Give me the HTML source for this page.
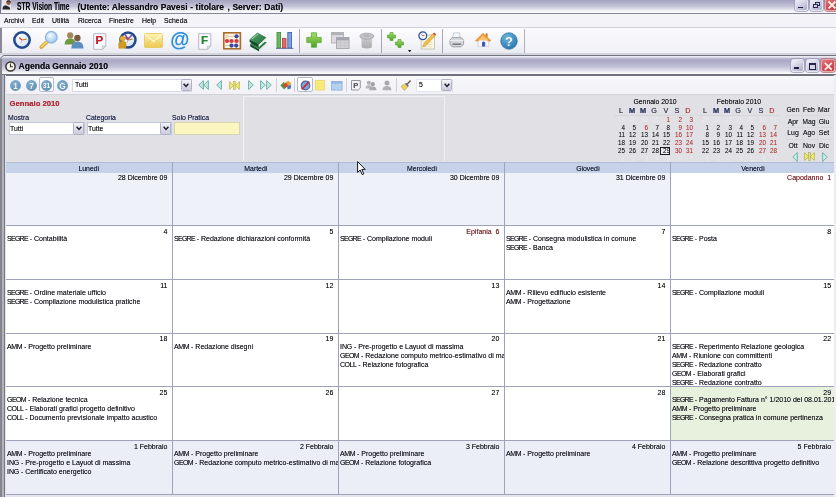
<!DOCTYPE html>
<html>
<head>
<meta charset="utf-8">
<title>STR Vision Time</title>
<style>
*{box-sizing:border-box;margin:0;padding:0}
html,body{-webkit-font-smoothing:antialiased;width:836px;height:497px;overflow:hidden;background:#ececf2;font-family:"Liberation Sans",sans-serif;font-size:7.3px;color:#151515;text-shadow:0 0 0.35px rgba(10,10,20,.55)}
#root{position:absolute;left:0;top:0;width:836px;height:497px;will-change:transform;opacity:.999}
.a{position:absolute}
.t{position:absolute;white-space:nowrap;font-size:7.3px;line-height:9px;transform:scaleX(.941);transform-origin:0 0}
.tr{position:absolute;white-space:nowrap;font-size:7.3px;line-height:9px;transform:scaleX(.941);transform-origin:100% 0;text-align:right}
.tc{position:absolute;white-space:nowrap;font-size:7.3px;line-height:9px;transform:scaleX(.941);transform-origin:50% 0;text-align:center}
.b{font-weight:bold}
.red{color:#cc2a30}
.cell{position:absolute;overflow:hidden}
.wbtn{position:absolute;border-radius:2.5px;border:1px solid #e6e6f2;box-shadow:0 0 0 .7px #9a9ab6;background:linear-gradient(150deg,#f3f3fb 0%,#d6d6e8 42%,#aaaac6 100%)}
.sep{position:absolute;width:1px;background:#a6a6b4}
svg{position:absolute;overflow:visible}
</style>
</head>
<body>
<div id="root">

<div class="a" style="left:0;top:0;width:836px;height:13.3px;background:linear-gradient(#a4a4c1 0%,#b2b2cb 25%,#c6c6d9 50%,#e2e2ec 72%,#f5f5fa 88%,#f9f9fd 100%)"></div>
<div class="a" style="left:0;top:0;width:1.2px;height:13px;background:#74749a"></div>
<div class="a" style="left:1.5px;top:0;width:9.5px;height:10px;background:linear-gradient(90deg,#f2eeee,#e6e4ee);opacity:.85"></div>
<svg style="left:1.5px;top:0" width="10" height="10" viewBox="0 0 10 10"><circle cx="6.6" cy="2.6" r="2.3" fill="#8a5a3a"/><path d="M4.6 1.2 Q6.6 -0.6 8.8 1.4 L8.6 2.2 Q6.4 0.8 4.6 2.4Z" fill="#3a2a20"/><path d="M0.4 9.4 Q0.6 5.6 3.4 5.2 L6.4 6.4 Q8.4 7 8.2 9.4 Z" fill="#2a2628"/></svg>
<div class="a b" style="left:17px;top:0.7px;font-size:10.2px;line-height:12px;white-space:nowrap;transform:scaleX(.655);transform-origin:0 0;color:#0c0c10">STR Vision Time</div>
<div class="a b" style="left:77.5px;top:0.5px;font-size:8.5px;line-height:12px;white-space:nowrap;color:#0c0c10;word-spacing:0.2px">(Utente: Alessandro Pavesi - titolare&nbsp;<span style="letter-spacing:-1.6px">&nbsp;</span>, Server: Dati)</div>
<div class="wbtn" style="left:795px;top:-2px;width:13px;height:13px"></div>
<div class="a" style="left:797.9px;top:6.5px;width:5px;height:1.9px;background:#1e1e40"></div>
<div class="wbtn" style="left:810px;top:-2px;width:13px;height:13px"></div>
<div class="a" style="left:815px;top:2px;width:5px;height:4px;border:1px solid #2a2a50;border-top-width:1.5px"></div>
<div class="a" style="left:813px;top:4px;width:5px;height:4px;border:1px solid #2a2a50;border-top-width:1.5px;background:#d0d0e0"></div>
<div class="wbtn" style="left:825.2px;top:-2px;width:13px;height:13px;border-color:#e8a8a8;box-shadow:0 0 0 .7px #b86a72;background:linear-gradient(150deg,#e27a7c 0%,#d2525a 45%,#c23a44 100%)"></div>
<svg style="left:828px;top:1px" width="8" height="8" viewBox="0 0 8 8"><path d="M0.5 0.5 L7.5 7.5 M7.5 0.5 L0.5 7.5" stroke="#fbeee6" stroke-width="1.8"/></svg>
<div class="a" style="left:0;top:13.1px;width:836px;height:1px;background:#868696"></div>
<div class="a" style="left:0;top:14px;width:836px;height:14px;background:#f3f3f8"></div>
<div class="t" style="left:3.6px;top:15.5px;color:#101018">Archivi</div>
<div class="t" style="left:32.3px;top:15.5px;color:#101018">Edit</div>
<div class="t" style="left:52px;top:15.5px;color:#101018">Utilità</div>
<div class="t" style="left:77.8px;top:15.5px;color:#101018">Ricerca</div>
<div class="t" style="left:108.6px;top:15.5px;color:#101018">Finestre</div>
<div class="t" style="left:142px;top:15.5px;color:#101018">Help</div>
<div class="t" style="left:163.5px;top:15.5px;color:#101018">Scheda</div>
<div class="a" style="left:0;top:27.4px;width:836px;height:1px;background:#d0d0da"></div>
<svg width="0" height="0" style="left:0;top:0"><defs>
<radialGradient id="gface" cx="40%" cy="35%" r="70%"><stop offset="0" stop-color="#ffffff"/><stop offset="1" stop-color="#cfe0f4"/></radialGradient>
<radialGradient id="glens" cx="40%" cy="35%" r="70%"><stop offset="0" stop-color="#f4fbff"/><stop offset="1" stop-color="#9cc6ec"/></radialGradient>
<linearGradient id="gmail" x1="0" y1="0" x2="0" y2="1"><stop offset="0" stop-color="#fdf3b4"/><stop offset="1" stop-color="#efc94e"/></linearGradient>
<linearGradient id="gplus" x1="0" y1="0" x2="0" y2="1"><stop offset="0" stop-color="#a6dc6a"/><stop offset="1" stop-color="#4fa326"/></linearGradient>
<radialGradient id="ghelp" cx="40%" cy="30%" r="75%"><stop offset="0" stop-color="#6cb6e0"/><stop offset="1" stop-color="#2676ae"/></radialGradient>
<radialGradient id="gcirc" cx="40%" cy="30%" r="75%"><stop offset="0" stop-color="#83b0d0"/><stop offset="1" stop-color="#5e90b6"/></radialGradient>
<linearGradient id="ggray" x1="0" y1="0" x2="0" y2="1"><stop offset="0" stop-color="#d6d6d8"/><stop offset="1" stop-color="#a8a8ac"/></linearGradient>
<linearGradient id="ggreenbk" x1="0" y1="0" x2="1" y2="1"><stop offset="0" stop-color="#5aa872"/><stop offset="1" stop-color="#1e6a3a"/></linearGradient>
</defs></svg>
<div class="a" style="left:0;top:28px;width:836px;height:26px;background:linear-gradient(#fcfcfe 0%,#f6f6fa 50%,#e9e9f1 100%)"></div>
<div class="a" style="left:525px;top:28px;width:311px;height:26px;background:linear-gradient(#fafafd,#f0f0f6)"></div>
<div class="a" style="left:0;top:28px;width:1.5px;height:26px;background:#8a8a96"></div>
<div class="a" style="left:0;top:53.4px;width:836px;height:1.2px;background:#d4d4de"></div>
<svg style="left:12px;top:30px" width="20" height="20" viewBox="0 0 20 20"><circle cx="10" cy="10" r="7.699999999999999" fill="url(#gface)" stroke="#214a8a" stroke-width="2.5"/><path d="M10 10 L7.2 7.6" stroke="#d04a28" stroke-width="1.3"/><path d="M10 10 L14.6 9.2" stroke="#d07a28" stroke-width="1.2"/><path d="M10 10 L8.8 13" stroke="#c8a090" stroke-width="0.8"/></svg>
<svg style="left:38px;top:30px" width="22" height="20" viewBox="0 0 22 20"><path d="M9.6 11.4 L3.2 17.2" stroke="#dca632" stroke-width="3.6" stroke-linecap="round"/><path d="M9.6 11.2 L3.4 16.8" stroke="#f6dc78" stroke-width="1.5" stroke-linecap="round"/><circle cx="13.3" cy="7.2" r="5.7" fill="url(#glens)" stroke="#92b8e2" stroke-width="1.5"/></svg>
<svg style="left:64px;top:30px" width="22" height="20" viewBox="0 0 22 20"><circle cx="6.2" cy="5.4" r="3.1" fill="#a08858"/><path d="M0.6 14.5 Q0.8 8.6 6.2 8.6 Q11.6 8.6 11.8 14.5 Z" fill="#6f9a3c"/><circle cx="13.4" cy="8" r="3.2" fill="#7a5a40"/><path d="M7.2 18.4 Q7.4 11.6 13.4 11.6 Q19.4 11.6 19.6 18.4 Z" fill="#5c8ec0"/></svg>
<svg style="left:93px;top:32.5px" width="14" height="17" viewBox="0 0 14 17"><path d="M0.7 0.7 H12.8 V13 L9.5 16.3 H0.7 Z" fill="#fbfbfd" stroke="#b4b8c4" stroke-width="1"/><path d="M12.8 13 H9.5 V16.3 Z" fill="#d8dae4" stroke="#b4b8c4" stroke-width="0.6"/><text x="6.4" y="11.2" font-family="Liberation Sans" font-weight="bold" font-size="11.5" text-anchor="middle" fill="#d41a28">P</text></svg>
<svg style="left:117.5px;top:30px" width="20" height="20" viewBox="0 0 20 20"><circle cx="10" cy="10" r="7.5" fill="url(#gface)" stroke="#214a8a" stroke-width="2.5"/><path d="M10 10 L7.2 7.6" stroke="#d04a28" stroke-width="1.3"/><path d="M10 10 L14.6 9.2" stroke="#d07a28" stroke-width="1.2"/><path d="M10 10 L8.8 13" stroke="#c8a090" stroke-width="0.8"/></svg>
<svg style="left:117.6px;top:35px" width="10" height="14" viewBox="0 0 10 14"><path d="M0.8 13.2 V8.6 Q0.8 6.2 4.4 6.2 Q8 6.2 8 8.6 V13.2 Z" fill="#d29a1e" stroke="#b8860f" stroke-width="0.5"/><circle cx="4.4" cy="3.6" r="2.5" fill="#e2ae30" stroke="#c08c14" stroke-width="0.5"/></svg>
<svg style="left:124px;top:33px" width="10" height="10" viewBox="0 0 10 10"><path d="M1 1.5 L4 6 L8 2" stroke="#8a4aa0" stroke-width="1.6" fill="none"/></svg>
<svg style="left:144px;top:33px" width="19" height="15" viewBox="0 0 19 15"><rect x="0.5" y="0.5" width="18" height="14" rx="1" fill="url(#gmail)" stroke="#e6c75a" stroke-width="0.8"/><path d="M0.8 1 L9.5 8.6 L18.2 1" fill="none" stroke="#fff8d0" stroke-width="1.3"/><path d="M0.8 14 L7 7 M18.2 14 L12 7" stroke="#e3c04e" stroke-width="0.8"/></svg>
<div class="a b" style="left:169.8px;top:27.4px;width:20px;height:24px;font-size:19.6px;line-height:24px;text-align:center;color:#2f8fd6;text-shadow:0 0 1px #9ccff2">@</div>
<svg style="left:198px;top:32.5px" width="14" height="17" viewBox="0 0 14 17"><path d="M0.7 0.7 H12.8 V13 L9.5 16.3 H0.7 Z" fill="#fbfbfd" stroke="#b4b8c4" stroke-width="1"/><path d="M12.8 13 H9.5 V16.3 Z" fill="#d8dae4" stroke="#b4b8c4" stroke-width="0.6"/><text x="6.4" y="11.2" font-family="Liberation Sans" font-weight="bold" font-size="11.5" text-anchor="middle" fill="#1e8a2c">F</text></svg>
<svg style="left:223px;top:32px" width="18" height="18" viewBox="0 0 18 18"><rect x="0.8" y="0.8" width="16.6" height="16" fill="#fbf3dc" stroke="#a86c2c" stroke-width="1.6"/><path d="M1 4.5 H17" stroke="#c8b48a" stroke-width="0.6"/><path d="M1 9 H17" stroke="#c8b48a" stroke-width="0.6"/><path d="M1 13.5 H17" stroke="#c8b48a" stroke-width="0.6"/><circle cx="13.5" cy="4.3" r="2.1" fill="#3a4aa8"/><circle cx="4" cy="9" r="2.1" fill="#d23a48"/><circle cx="8.5" cy="9" r="2.1" fill="#d23a48"/><circle cx="13.5" cy="9" r="2.1" fill="#d23a48"/><circle cx="8.5" cy="13.6" r="2.1" fill="#3a4aa8"/><circle cx="13.2" cy="13.6" r="2.1" fill="#3a4aa8"/><circle cx="3.5" cy="4.6" r="2.1" fill="#e8d8c0"/></svg>
<svg style="left:247.5px;top:30.5px" width="20" height="21" viewBox="0 0 20 21"><path d="M2.2 13 L11.2 18.2 V20.6 L2.2 15.4 Z" fill="#14502a"/><path d="M11.2 18.2 L18.8 11.4 V13.8 L11.2 20.6Z" fill="#e6eadf"/><path d="M2.2 13 L9.6 7.4 L18.8 11.4 L11.2 18.2 Z" fill="#2c7a48"/><path d="M1.6 8.2 L10.6 13.4 V16.2 L1.6 11 Z" fill="#0f4a26"/><path d="M10.6 13.4 L18.4 6.4 V9.2 L10.6 16.2Z" fill="#eef0e6"/><path d="M1.6 8.2 L9.4 1.6 L18.4 6.4 L10.6 13.4 Z" fill="url(#ggreenbk)"/><path d="M4 8 L10 3" stroke="#a4d8b4" stroke-width="1"/></svg>
<svg style="left:276px;top:31px" width="18" height="18" viewBox="0 0 18 18"><rect x="1" y="1.5" width="3.6" height="15.5" fill="#6cb85c" stroke="#3c8a3a" stroke-width="0.8"/><rect x="6.4" y="7.5" width="3.6" height="9.5" fill="#e46a6a" stroke="#b83a3a" stroke-width="0.8"/><rect x="11.8" y="1.5" width="3.8" height="15.5" fill="#7aa4e0" stroke="#3c5ca8" stroke-width="0.8"/><path d="M0 17.4 H17.5" stroke="#5a6a9a" stroke-width="0.9"/></svg>
<div class="sep" style="left:299px;top:29px;height:24px"></div>
<svg style="left:306px;top:32px" width="16" height="16" viewBox="0 0 16 16"><path d="M5.4 0.8 H10.6 V5.4 H15.2 V10.6 H10.6 V15.2 H5.4 V10.6 H0.8 V5.4 H5.4 Z" fill="url(#gplus)" stroke="#5aa832" stroke-width="0.8" stroke-linejoin="round"/></svg>
<svg style="left:331px;top:32px" width="19" height="17" viewBox="0 0 19 17"><rect x="0.5" y="0.5" width="12" height="10.5" fill="#dcdce0" stroke="#b6b6bc"/><rect x="0.5" y="0.5" width="12" height="2.6" fill="#b0b0b8"/><rect x="5.5" y="5.5" width="12.5" height="11" fill="#d2d2d6" stroke="#a8a8b0"/><rect x="5.5" y="5.5" width="12.5" height="2.8" fill="#a4a4ac"/><path d="M5.5 11 H18 M5.5 13.6 H18 M9.6 8.3 V16.5 M13.8 8.3 V16.5" stroke="#bcbcc2" stroke-width="0.5"/></svg>
<svg style="left:359px;top:32px" width="16" height="17" viewBox="0 0 16 17"><path d="M2.2 4.8 L2.8 15.4 Q7.8 17.4 12.8 15.4 L13.4 4.8 Z" fill="url(#ggray)"/><ellipse cx="7.8" cy="4.2" rx="7" ry="3" fill="#c4c4c8" stroke="#a2a2a8" stroke-width="0.8"/><ellipse cx="7.8" cy="3.6" rx="3" ry="1.2" fill="#b0b0b6"/><path d="M5.2 7.5 L5.8 15.4 M7.8 7.8 V16 M10.4 7.5 L9.8 15.4" stroke="#b6b6ba" stroke-width="0.7"/></svg>
<div class="sep" style="left:381px;top:29px;height:24px"></div>
<svg style="left:387px;top:32px" width="9" height="9" viewBox="0 0 9 9"><path d="M3 0.5 H6 V3 H8.5 V6 H6 V8.5 H3 V6 H0.5 V3 H3 Z" fill="url(#gplus)" stroke="#58a630" stroke-width="0.7" stroke-linejoin="round"/></svg>
<svg style="left:395px;top:38.5px" width="9" height="9" viewBox="0 0 9 9"><path d="M3 0.5 H6 V3 H8.5 V6 H6 V8.5 H3 V6 H0.5 V3 H3 Z" fill="url(#gplus)" stroke="#58a630" stroke-width="0.7" stroke-linejoin="round"/></svg>
<svg style="left:408px;top:50px" width="4" height="3" viewBox="0 0 4 3"><path d="M0 0 H3.4 L1.7 2.2 Z" fill="#111"/></svg>
<svg style="left:418px;top:31px" width="18" height="19" viewBox="0 0 18 19"><rect x="3.2" y="4" width="13.2" height="14" fill="#fbfbf4" stroke="#b8b8a8" stroke-width="0.8"/><path d="M5 11 H14.5 M5 13.4 H14.5 M5 15.8 H14.5" stroke="#e6c890" stroke-width="0.7"/><path d="M4.5 16 L6 12.5 L15 2.6 L17.2 4.6 L8 14.6 Z" fill="#f0c040" stroke="#c08820" stroke-width="0.5"/><path d="M15 2.6 L17.2 4.6 L18 3.2 L16.2 1.6Z" fill="#c03828"/><circle cx="4.8" cy="4.8" r="3.9" fill="#f4f8ff" stroke="#2c50a0" stroke-width="1.3"/><path d="M4.8 4.8 L3.4 3.4 M4.8 4.8 L6.6 4.2" stroke="#c83020" stroke-width="0.8"/></svg>
<div class="sep" style="left:441.5px;top:29px;height:24px"></div>
<svg style="left:449px;top:32px" width="16" height="16" viewBox="0 0 16 16"><path d="M4.4 1 L10.4 0.8 L11.4 6.4 H3.6 Z" fill="#f4f6fa" stroke="#b8bcc8" stroke-width="0.7"/><path d="M1 7.8 L3.4 5.6 H12 L14.6 7.8 V12.2 L12 14.8 H3.2 L1 12.2 Z" fill="#d4d6dc" stroke="#8c9098" stroke-width="0.8"/><path d="M1 8.6 H14.6" stroke="#f0f0f4" stroke-width="1"/><path d="M3.4 11.4 H12.2 V13 H3.4Z" fill="#787c84"/></svg>
<svg style="left:475px;top:32px" width="17" height="16" viewBox="0 0 17 16"><path d="M3 8 V14.6 H13.8 V8 Z" fill="#f6f6fa" stroke="#c0c4d0" stroke-width="0.6"/><path d="M0.6 8.6 L8 1.2 L15.8 8.6 L14 9.4 L8 4 L2.4 9.4 Z" fill="#f0a040" stroke="#d88420" stroke-width="0.6"/><path d="M8 3.4 L3 8.2 H13.4 Z" fill="#f8c070"/><rect x="10.6" y="1.4" width="2" height="3.4" fill="#d07828"/><path d="M7 14.6 V10.4 Q8.6 8.4 10.2 10.4 V14.6 Z" fill="#3a5ab0"/></svg>
<svg style="left:500px;top:31.5px" width="18" height="18" viewBox="0 0 18 18"><circle cx="9" cy="9" r="8.3" fill="url(#ghelp)" stroke="#1f6a9e" stroke-width="0.6"/><text x="9" y="13.6" font-family="Liberation Sans" font-weight="bold" font-size="13" text-anchor="middle" fill="#fff">?</text></svg>
<div class="sep" style="left:524px;top:29px;height:24px;background:#b0b0be"></div>
<div class="a" style="left:0;top:56px;width:836px;height:441px;background:#e9e9f0"></div>
<div class="a" style="left:0.3px;top:54.9px;width:838px;height:20.1px;border-top-left-radius:5px;border:1px solid #74747f;border-bottom:none;background:linear-gradient(#eeeef7 0%,#e4e4f1 6%,#b4b4cd 14%,#a9a9c5 24%,#bcbcd4 52%,#dedeeb 76%,#f8f8fc 90%,#ffffff 100%)"></div>
<div class="a" style="left:2px;top:74.4px;width:834px;height:1.5px;background:#72727e"></div>
<div class="a" style="left:0;top:59px;width:2px;height:438px;background:#85858e"></div>
<div class="a" style="left:2px;top:75px;width:1.6px;height:422px;background:#b2b2bc"></div>
<div class="a" style="left:3.5px;top:75px;width:1.3px;height:422px;background:#767680"></div>
<div class="a" style="left:4.8px;top:75px;width:1.2px;height:422px;background:#e2e2ea"></div>
<div class="a" style="left:834px;top:75px;width:2px;height:422px;background:#ededf3"></div>
<svg style="left:5px;top:60.5px" width="11" height="11" viewBox="0 0 11 11"><circle cx="5.5" cy="5.5" r="4.6" fill="#f6f6f2" stroke="#3a3428" stroke-width="1.5"/><path d="M5.5 2.6 V5.7 H8" stroke="#3a3428" stroke-width="1.1" fill="none"/></svg>
<div class="a b" style="left:18.6px;top:60.1px;font-size:8.6px;line-height:12px;white-space:nowrap;color:#0c0c10;letter-spacing:-0.02px">Agenda Gennaio 2010</div>
<div class="wbtn" style="left:791.4px;top:59px;width:12.4px;height:13.4px"></div>
<div class="a" style="left:794.3px;top:67.4px;width:4.3px;height:1.9px;background:#1e1e40"></div>
<div class="wbtn" style="left:806.2px;top:59px;width:12.8px;height:13.4px"></div>
<div class="a" style="left:809.2px;top:62.6px;width:7.2px;height:7.3px;border:1px solid #26264a;border-top-width:2px;background:#d6d6e6"></div>
<div class="wbtn" style="left:821.2px;top:59px;width:13.6px;height:13.4px;border-color:#e8a8a8;box-shadow:0 0 0 .7px #b86a72;background:linear-gradient(150deg,#e27a7c 0%,#d2525a 45%,#c23a44 100%)"></div>
<svg style="left:824px;top:61.8px" width="8.6" height="8.6" viewBox="0 0 8.6 8.6"><path d="M0.8 0.8 L7.8 7.8 M7.8 0.8 L0.8 7.8" stroke="#fbeee6" stroke-width="1.8"/></svg>
<div class="a" style="left:6px;top:75.9px;width:828px;height:18.4px;background:linear-gradient(#f8f8fb,#f1f1f6)"></div>
<svg style="left:9.5px;top:79.5px" width="11" height="11" viewBox="0 0 11 11"><circle cx="5.5" cy="5.5" r="5.4" fill="url(#gcirc)"/><text x="5.5" y="8.524000000000001" font-family="Liberation Sans" font-weight="bold" font-size="8.4" text-anchor="middle" fill="#fff">1</text></svg>
<svg style="left:25.5px;top:79.5px" width="11" height="11" viewBox="0 0 11 11"><circle cx="5.5" cy="5.5" r="5.4" fill="url(#gcirc)"/><text x="5.5" y="8.524000000000001" font-family="Liberation Sans" font-weight="bold" font-size="8.4" text-anchor="middle" fill="#fff">7</text></svg>
<div class="a" style="left:39.4px;top:77.4px;width:14.6px;height:14.6px;border:1px solid #b8bccc;border-radius:2px;background:#fdfdff"></div>
<svg style="left:41.2px;top:79.5px" width="11" height="11" viewBox="0 0 11 11"><circle cx="5.5" cy="5.5" r="5.4" fill="url(#gcirc)"/><text x="5.5" y="7.948" font-family="Liberation Sans" font-weight="bold" font-size="6.8" text-anchor="middle" fill="#fff">31</text></svg>
<svg style="left:56.5px;top:79.5px" width="11" height="11" viewBox="0 0 11 11"><circle cx="5.5" cy="5.5" r="5.4" fill="url(#gcirc)"/><text x="5.5" y="8.524000000000001" font-family="Liberation Sans" font-weight="bold" font-size="8.4" text-anchor="middle" fill="#fff">G</text></svg>
<div class="a" style="left:71.5px;top:78.5px;width:120.5px;height:13px;background:#fff;border:1px solid #d6dae6"></div>
<div class="a" style="left:180.5px;top:79.0px;width:11.0px;height:12px;border:1px solid #b0b0c6;border-radius:1.5px;background:linear-gradient(#f4f4fa,#cacadc)"></div>
<svg style="left:183.1px;top:82.8px" width="6" height="5" viewBox="0 0 6 5"><path d="M0.6 0.8 L3 3.4 L5.4 0.8" stroke="#1c1c28" stroke-width="1.5" fill="none"/></svg>
<div class="t" style="left:75.1px;top:80.4px">Tutti</div>
<svg style="left:197.8px;top:80px" width="6" height="10" viewBox="0 0 6 10"><path d="M5.4 0.6 L0.7 5 L5.4 9.4 Z" fill="#c2eadc" stroke="#55a0a6" stroke-width="0.8" stroke-linejoin="round"/></svg>
<svg style="left:203.4px;top:80px" width="6" height="10" viewBox="0 0 6 10"><path d="M5.4 0.6 L0.7 5 L5.4 9.4 Z" fill="#c2eadc" stroke="#55a0a6" stroke-width="0.8" stroke-linejoin="round"/></svg>
<svg style="left:216px;top:80px" width="6" height="10" viewBox="0 0 6 10"><path d="M5.4 0.6 L0.7 5 L5.4 9.4 Z" fill="#c2eadc" stroke="#55a0a6" stroke-width="0.8" stroke-linejoin="round"/></svg>
<svg style="left:229.3px;top:80.5px" width="11" height="9" viewBox="0 0 11 9"><path d="M0.6 0.6 L4.4 4.5 L0.6 8.4 Z" fill="#f2ee70" stroke="#b0ac3c" stroke-width="0.7"/><path d="M10.4 0.6 L6.6 4.5 L10.4 8.4 Z" fill="#f2ee70" stroke="#b0ac3c" stroke-width="0.7"/><rect x="4.7" y="0.4" width="1.6" height="8.2" fill="#e6e25a" stroke="#a8a438" stroke-width="0.5"/></svg>
<svg style="left:247.6px;top:80px" width="6" height="10" viewBox="0 0 6 10"><path d="M0.6 0.6 L5.3 5 L0.6 9.4 Z" fill="#c2eadc" stroke="#55a0a6" stroke-width="0.8" stroke-linejoin="round"/></svg>
<svg style="left:260.2px;top:80px" width="6" height="10" viewBox="0 0 6 10"><path d="M0.6 0.6 L5.3 5 L0.6 9.4 Z" fill="#c2eadc" stroke="#55a0a6" stroke-width="0.8" stroke-linejoin="round"/></svg>
<svg style="left:265.8px;top:80px" width="6" height="10" viewBox="0 0 6 10"><path d="M0.6 0.6 L5.3 5 L0.6 9.4 Z" fill="#c2eadc" stroke="#55a0a6" stroke-width="0.8" stroke-linejoin="round"/></svg>
<div class="sep" style="left:276px;top:78px;height:14px;background:#cfcfd9"></div>
<svg style="left:280px;top:79.6px" width="12" height="10" viewBox="0 0 12 10"><path d="M0.4 5.6 L3.6 2 L7.6 5.6 L4.2 9.6 Z" fill="#4a9a3c"/><path d="M3.8 3.4 L8.2 0.8 L11.4 3.6 L7.4 7.4Z" fill="#e2a234"/><circle cx="5.6" cy="5.4" r="2.1" fill="#d8442e"/><path d="M7.2 6.2 L11.2 4.6 L10.8 8.6 L7.6 9.4Z" fill="#4a74c0"/></svg>
<div class="sep" style="left:294px;top:78px;height:14px;background:#cfcfd9"></div>
<div class="a" style="left:296.8px;top:77.4px;width:16.2px;height:15px;border:1px solid #b6bace;border-radius:2px;background:#fff"></div>
<svg style="left:299.5px;top:79.5px" width="11" height="11" viewBox="0 0 11 11"><circle cx="5.5" cy="5.5" r="4.3" fill="#7aa4d8" stroke="#4a6aa8" stroke-width="1.2"/><path d="M9.2 1.6 L1.8 9.4" stroke="#c8303c" stroke-width="1.8"/></svg>
<svg style="left:315px;top:80px" width="10" height="10.5" viewBox="0 0 10 10.5"><rect x="0.4" y="0.4" width="9.2" height="9.6" fill="#f8ec7c" stroke="#e4d458" stroke-width="0.7"/><path d="M1.5 4 H8.5 M1.5 6.5 H8.5" stroke="#f0e060" stroke-width="0.6"/></svg>
<svg style="left:331px;top:80.5px" width="11.5" height="9.5" viewBox="0 0 11.5 9.5"><rect x="0.4" y="0.4" width="10.7" height="8.7" fill="#b4d2ee" stroke="#8ab0da" stroke-width="0.8"/><rect x="0.4" y="0.4" width="10.7" height="2.2" fill="#8eb6e0"/></svg>
<div class="sep" style="left:345.8px;top:78px;height:14px;background:#cfcfd9"></div>
<svg style="left:350.5px;top:80px" width="10" height="10.5" viewBox="0 0 10 10.5"><path d="M0.5 0.5 H9.3 V8 L7.2 10 H0.5Z" fill="#f4f4f6" stroke="#8c8c94" stroke-width="0.9"/><text x="4.8" y="8.2" font-family="Liberation Sans" font-weight="bold" font-size="7.6" text-anchor="middle" fill="#5a5a62">P</text></svg>
<svg style="left:364.5px;top:80px" width="12" height="10.5" viewBox="0 0 12 10.5"><circle cx="3.8" cy="2.8" r="2" fill="#b0b0b4"/><path d="M0.4 8.6 Q0.6 5 3.8 5 Q7 5 7.2 8.6Z" fill="#b8b8bc"/><circle cx="7.8" cy="4.2" r="2.1" fill="#a0a0a6"/><path d="M4 10.2 Q4.2 6.4 7.8 6.4 Q11.4 6.4 11.6 10.2Z" fill="#a8a8ae"/></svg>
<svg style="left:381.5px;top:80px" width="10" height="10.5" viewBox="0 0 10 10.5"><circle cx="5" cy="3" r="2.5" fill="#a8a8ae"/><path d="M0.5 10.2 Q0.7 6 5 6 Q9.3 6 9.5 10.2Z" fill="#b0b0b6"/></svg>
<div class="sep" style="left:395.8px;top:78px;height:14px;background:#cfcfd9"></div>
<svg style="left:400px;top:79.5px" width="12" height="11" viewBox="0 0 12 11"><path d="M10.6 0.6 L6.4 5" stroke="#6a5a48" stroke-width="1.4"/><path d="M1 6.4 L6 3.2 L8.6 6 L4.4 10.4 Z" fill="#e8d460" stroke="#b8a030" stroke-width="0.6"/><path d="M5.6 3.6 L8.2 6.2" stroke="#4a6ab0" stroke-width="1.4"/></svg>
<div class="a" style="left:416.4px;top:78.5px;width:36.5px;height:13px;background:#fff;border:1px solid #e2e5ee"></div>
<div class="a" style="left:441.4px;top:79.0px;width:11.0px;height:12px;border:1px solid #b0b0c6;border-radius:1.5px;background:linear-gradient(#f4f4fa,#cacadc)"></div>
<svg style="left:444.0px;top:82.8px" width="6" height="5" viewBox="0 0 6 5"><path d="M0.6 0.8 L3 3.4 L5.4 0.8" stroke="#1c1c28" stroke-width="1.5" fill="none"/></svg>
<div class="t" style="left:418.79999999999995px;top:80.4px">5</div>
<div class="a" style="left:6px;top:94.2px;width:828px;height:67.4px;background:#e0e0e5"></div>
<div class="a" style="left:6px;top:94.2px;width:828px;height:1px;background:#d2d2da"></div>
<div class="a" style="left:243px;top:96px;width:201px;height:64.5px;background:#dfdfe4;border-left:1px solid #f4f4f8;border-top:1px solid #f0f0f5"></div>
<div class="a" style="left:444px;top:96px;width:1px;height:64.5px;background:#eeeef3"></div>
<div class="a b" style="left:9.6px;top:98.8px;font-size:7.7px;line-height:10px;white-space:nowrap;color:#c8202e">Gennaio 2010</div>
<div class="t" style="left:7.8px;top:112.8px;color:#182050">Mostra</div>
<div class="a" style="left:8.5px;top:121.8px;width:76.3px;height:13.6px;background:#fff;border:1px solid #c2cadc"></div>
<div class="a" style="left:73.3px;top:122.3px;width:11.0px;height:12.6px;border:1px solid #b0b0c6;border-radius:1.5px;background:linear-gradient(#f4f4fa,#cacadc)"></div>
<svg style="left:75.89999999999999px;top:126.39999999999999px" width="6" height="5" viewBox="0 0 6 5"><path d="M0.6 0.8 L3 3.4 L5.4 0.8" stroke="#1c1c28" stroke-width="1.5" fill="none"/></svg>
<div class="t" style="left:10.3px;top:124.0px">Tutti</div>
<div class="t" style="left:86.3px;top:112.8px;color:#182050">Categoria</div>
<div class="a" style="left:86.6px;top:121.8px;width:85.2px;height:13.6px;background:#fff;border:1px solid #c2cadc"></div>
<div class="a" style="left:160.3px;top:122.3px;width:11.0px;height:12.6px;border:1px solid #b0b0c6;border-radius:1.5px;background:linear-gradient(#f4f4fa,#cacadc)"></div>
<svg style="left:162.9px;top:126.39999999999999px" width="6" height="5" viewBox="0 0 6 5"><path d="M0.6 0.8 L3 3.4 L5.4 0.8" stroke="#1c1c28" stroke-width="1.5" fill="none"/></svg>
<div class="t" style="left:88.39999999999999px;top:124.0px">Tutte</div>
<div class="t" style="left:172.2px;top:112.8px;color:#182050">Solo Pratica</div>
<div class="a" style="left:174.4px;top:121.6px;width:66px;height:13.6px;background:#fbf6c0;border:1px solid #d6d4b4"></div>
<div class="tc" style="left:615.4px;width:80px;top:97px">Gennaio 2010</div>
<div class="a" style="left:614.6px;width:12px;top:105.8px;font-size:7.9px;line-height:10px;text-align:center;color:#3a3a42;font-weight:normal;transform:scaleX(.92)">L</div>
<div class="a" style="left:625.87px;width:12px;top:105.8px;font-size:7.9px;line-height:10px;text-align:center;color:#2c3468;font-weight:bold;transform:scaleX(.92)">M</div>
<div class="a" style="left:637.14px;width:12px;top:105.8px;font-size:7.9px;line-height:10px;text-align:center;color:#2c3468;font-weight:bold;transform:scaleX(.92)">M</div>
<div class="a" style="left:648.4100000000001px;width:12px;top:105.8px;font-size:7.9px;line-height:10px;text-align:center;color:#3c4458;font-weight:normal;transform:scaleX(.92)">G</div>
<div class="a" style="left:659.6800000000001px;width:12px;top:105.8px;font-size:7.9px;line-height:10px;text-align:center;color:#3c4458;font-weight:normal;transform:scaleX(.92)">V</div>
<div class="a" style="left:670.95px;width:12px;top:105.8px;font-size:7.9px;line-height:10px;text-align:center;color:#34405c;font-weight:normal;transform:scaleX(.92)">S</div>
<div class="a" style="left:682.22px;width:12px;top:105.8px;font-size:7.9px;line-height:10px;text-align:center;color:#cc3a3a;font-weight:normal;transform:scaleX(.92)">D</div>
<div class="a" style="left:613.6px;top:114.5px;width:81.62px;height:1px;background:#d6d6dc"></div>
<div class="tr" style="left:611.2px;width:14px;top:114.8px;color:#e9e9ee;font-size:6.7px;text-shadow:none">28</div>
<div class="tr" style="left:622.47px;width:14px;top:114.8px;color:#e9e9ee;font-size:6.7px;text-shadow:none">29</div>
<div class="tr" style="left:633.74px;width:14px;top:114.8px;color:#e9e9ee;font-size:6.7px;text-shadow:none">30</div>
<div class="tr" style="left:645.0100000000001px;width:14px;top:114.8px;color:#e9e9ee;font-size:6.7px;text-shadow:none">31</div>
<div class="tr" style="left:656.2800000000001px;width:14px;top:114.8px;color:#cc3a3a;font-size:6.7px;text-shadow:0 0 .3px rgba(10,10,20,.35)">1</div>
<div class="tr" style="left:667.5500000000001px;width:14px;top:114.8px;color:#cc3a3a;font-size:6.7px;text-shadow:0 0 .3px rgba(10,10,20,.35)">2</div>
<div class="tr" style="left:678.82px;width:14px;top:114.8px;color:#cc3a3a;font-size:6.7px;text-shadow:0 0 .3px rgba(10,10,20,.35)">3</div>
<div class="tr" style="left:611.2px;width:14px;top:122.6px;color:#16161c;font-size:6.7px;text-shadow:0 0 .3px rgba(10,10,20,.35)">4</div>
<div class="tr" style="left:622.47px;width:14px;top:122.6px;color:#16161c;font-size:6.7px;text-shadow:0 0 .3px rgba(10,10,20,.35)">5</div>
<div class="tr" style="left:633.74px;width:14px;top:122.6px;color:#cc3a3a;font-size:6.7px;text-shadow:0 0 .3px rgba(10,10,20,.35)">6</div>
<div class="tr" style="left:645.0100000000001px;width:14px;top:122.6px;color:#16161c;font-size:6.7px;text-shadow:0 0 .3px rgba(10,10,20,.35)">7</div>
<div class="tr" style="left:656.2800000000001px;width:14px;top:122.6px;color:#16161c;font-size:6.7px;text-shadow:0 0 .3px rgba(10,10,20,.35)">8</div>
<div class="tr" style="left:667.5500000000001px;width:14px;top:122.6px;color:#cc3a3a;font-size:6.7px;text-shadow:0 0 .3px rgba(10,10,20,.35)">9</div>
<div class="tr" style="left:678.82px;width:14px;top:122.6px;color:#cc3a3a;font-size:6.7px;text-shadow:0 0 .3px rgba(10,10,20,.35)">10</div>
<div class="tr" style="left:611.2px;width:14px;top:130.4px;color:#16161c;font-size:6.7px;text-shadow:0 0 .3px rgba(10,10,20,.35)">11</div>
<div class="tr" style="left:622.47px;width:14px;top:130.4px;color:#16161c;font-size:6.7px;text-shadow:0 0 .3px rgba(10,10,20,.35)">12</div>
<div class="tr" style="left:633.74px;width:14px;top:130.4px;color:#16161c;font-size:6.7px;text-shadow:0 0 .3px rgba(10,10,20,.35)">13</div>
<div class="tr" style="left:645.0100000000001px;width:14px;top:130.4px;color:#16161c;font-size:6.7px;text-shadow:0 0 .3px rgba(10,10,20,.35)">14</div>
<div class="tr" style="left:656.2800000000001px;width:14px;top:130.4px;color:#16161c;font-size:6.7px;text-shadow:0 0 .3px rgba(10,10,20,.35)">15</div>
<div class="tr" style="left:667.5500000000001px;width:14px;top:130.4px;color:#cc3a3a;font-size:6.7px;text-shadow:0 0 .3px rgba(10,10,20,.35)">16</div>
<div class="tr" style="left:678.82px;width:14px;top:130.4px;color:#cc3a3a;font-size:6.7px;text-shadow:0 0 .3px rgba(10,10,20,.35)">17</div>
<div class="tr" style="left:611.2px;width:14px;top:138.20000000000002px;color:#16161c;font-size:6.7px;text-shadow:0 0 .3px rgba(10,10,20,.35)">18</div>
<div class="tr" style="left:622.47px;width:14px;top:138.20000000000002px;color:#16161c;font-size:6.7px;text-shadow:0 0 .3px rgba(10,10,20,.35)">19</div>
<div class="tr" style="left:633.74px;width:14px;top:138.20000000000002px;color:#16161c;font-size:6.7px;text-shadow:0 0 .3px rgba(10,10,20,.35)">20</div>
<div class="tr" style="left:645.0100000000001px;width:14px;top:138.20000000000002px;color:#16161c;font-size:6.7px;text-shadow:0 0 .3px rgba(10,10,20,.35)">21</div>
<div class="tr" style="left:656.2800000000001px;width:14px;top:138.20000000000002px;color:#16161c;font-size:6.7px;text-shadow:0 0 .3px rgba(10,10,20,.35)">22</div>
<div class="tr" style="left:667.5500000000001px;width:14px;top:138.20000000000002px;color:#cc3a3a;font-size:6.7px;text-shadow:0 0 .3px rgba(10,10,20,.35)">23</div>
<div class="tr" style="left:678.82px;width:14px;top:138.20000000000002px;color:#cc3a3a;font-size:6.7px;text-shadow:0 0 .3px rgba(10,10,20,.35)">24</div>
<div class="tr" style="left:611.2px;width:14px;top:146.0px;color:#16161c;font-size:6.7px;text-shadow:0 0 .3px rgba(10,10,20,.35)">25</div>
<div class="tr" style="left:622.47px;width:14px;top:146.0px;color:#16161c;font-size:6.7px;text-shadow:0 0 .3px rgba(10,10,20,.35)">26</div>
<div class="tr" style="left:633.74px;width:14px;top:146.0px;color:#16161c;font-size:6.7px;text-shadow:0 0 .3px rgba(10,10,20,.35)">27</div>
<div class="tr" style="left:645.0100000000001px;width:14px;top:146.0px;color:#16161c;font-size:6.7px;text-shadow:0 0 .3px rgba(10,10,20,.35)">28</div>
<div class="a" style="left:660.08px;top:146.89999999999998px;width:10.4px;height:7.8px;border:1px solid #1a1a20;background:#ececf0"></div>
<div class="tr" style="left:656.2800000000001px;width:14px;top:146.0px;color:#16161c;font-size:6.7px;text-shadow:0 0 .3px rgba(10,10,20,.35)">29</div>
<div class="tr" style="left:667.5500000000001px;width:14px;top:146.0px;color:#cc3a3a;font-size:6.7px;text-shadow:0 0 .3px rgba(10,10,20,.35)">30</div>
<div class="tr" style="left:678.82px;width:14px;top:146.0px;color:#cc3a3a;font-size:6.7px;text-shadow:0 0 .3px rgba(10,10,20,.35)">31</div>
<div class="tr" style="left:611.2px;width:14px;top:153.8px;color:#e9e9ee;font-size:6.7px;text-shadow:none">1</div>
<div class="tr" style="left:622.47px;width:14px;top:153.8px;color:#e9e9ee;font-size:6.7px;text-shadow:none">2</div>
<div class="tr" style="left:633.74px;width:14px;top:153.8px;color:#e9e9ee;font-size:6.7px;text-shadow:none">3</div>
<div class="tr" style="left:645.0100000000001px;width:14px;top:153.8px;color:#e9e9ee;font-size:6.7px;text-shadow:none">4</div>
<div class="tr" style="left:656.2800000000001px;width:14px;top:153.8px;color:#e9e9ee;font-size:6.7px;text-shadow:none">5</div>
<div class="tr" style="left:667.5500000000001px;width:14px;top:153.8px;color:#e9e9ee;font-size:6.7px;text-shadow:none">6</div>
<div class="tr" style="left:678.82px;width:14px;top:153.8px;color:#e9e9ee;font-size:6.7px;text-shadow:none">7</div>
<div class="tc" style="left:698.8px;width:80px;top:97px">Febbraio 2010</div>
<div class="a" style="left:698.6px;width:12px;top:105.8px;font-size:7.9px;line-height:10px;text-align:center;color:#3a3a42;font-weight:normal;transform:scaleX(.92)">L</div>
<div class="a" style="left:709.87px;width:12px;top:105.8px;font-size:7.9px;line-height:10px;text-align:center;color:#2c3468;font-weight:bold;transform:scaleX(.92)">M</div>
<div class="a" style="left:721.14px;width:12px;top:105.8px;font-size:7.9px;line-height:10px;text-align:center;color:#2c3468;font-weight:bold;transform:scaleX(.92)">M</div>
<div class="a" style="left:732.4100000000001px;width:12px;top:105.8px;font-size:7.9px;line-height:10px;text-align:center;color:#3c4458;font-weight:normal;transform:scaleX(.92)">G</div>
<div class="a" style="left:743.6800000000001px;width:12px;top:105.8px;font-size:7.9px;line-height:10px;text-align:center;color:#3c4458;font-weight:normal;transform:scaleX(.92)">V</div>
<div class="a" style="left:754.95px;width:12px;top:105.8px;font-size:7.9px;line-height:10px;text-align:center;color:#34405c;font-weight:normal;transform:scaleX(.92)">S</div>
<div class="a" style="left:766.22px;width:12px;top:105.8px;font-size:7.9px;line-height:10px;text-align:center;color:#cc3a3a;font-weight:normal;transform:scaleX(.92)">D</div>
<div class="a" style="left:697.6px;top:114.5px;width:81.62px;height:1px;background:#d6d6dc"></div>
<div class="tr" style="left:695.2px;width:14px;top:114.8px;color:#e9e9ee;font-size:6.7px;text-shadow:none">25</div>
<div class="tr" style="left:706.47px;width:14px;top:114.8px;color:#e9e9ee;font-size:6.7px;text-shadow:none">26</div>
<div class="tr" style="left:717.74px;width:14px;top:114.8px;color:#e9e9ee;font-size:6.7px;text-shadow:none">27</div>
<div class="tr" style="left:729.0100000000001px;width:14px;top:114.8px;color:#e9e9ee;font-size:6.7px;text-shadow:none">28</div>
<div class="tr" style="left:740.2800000000001px;width:14px;top:114.8px;color:#e9e9ee;font-size:6.7px;text-shadow:none">29</div>
<div class="tr" style="left:751.5500000000001px;width:14px;top:114.8px;color:#e9e9ee;font-size:6.7px;text-shadow:none">30</div>
<div class="tr" style="left:762.82px;width:14px;top:114.8px;color:#e9e9ee;font-size:6.7px;text-shadow:none">31</div>
<div class="tr" style="left:695.2px;width:14px;top:122.6px;color:#16161c;font-size:6.7px;text-shadow:0 0 .3px rgba(10,10,20,.35)">1</div>
<div class="tr" style="left:706.47px;width:14px;top:122.6px;color:#16161c;font-size:6.7px;text-shadow:0 0 .3px rgba(10,10,20,.35)">2</div>
<div class="tr" style="left:717.74px;width:14px;top:122.6px;color:#16161c;font-size:6.7px;text-shadow:0 0 .3px rgba(10,10,20,.35)">3</div>
<div class="tr" style="left:729.0100000000001px;width:14px;top:122.6px;color:#16161c;font-size:6.7px;text-shadow:0 0 .3px rgba(10,10,20,.35)">4</div>
<div class="tr" style="left:740.2800000000001px;width:14px;top:122.6px;color:#16161c;font-size:6.7px;text-shadow:0 0 .3px rgba(10,10,20,.35)">5</div>
<div class="tr" style="left:751.5500000000001px;width:14px;top:122.6px;color:#cc3a3a;font-size:6.7px;text-shadow:0 0 .3px rgba(10,10,20,.35)">6</div>
<div class="tr" style="left:762.82px;width:14px;top:122.6px;color:#cc3a3a;font-size:6.7px;text-shadow:0 0 .3px rgba(10,10,20,.35)">7</div>
<div class="tr" style="left:695.2px;width:14px;top:130.4px;color:#16161c;font-size:6.7px;text-shadow:0 0 .3px rgba(10,10,20,.35)">8</div>
<div class="tr" style="left:706.47px;width:14px;top:130.4px;color:#16161c;font-size:6.7px;text-shadow:0 0 .3px rgba(10,10,20,.35)">9</div>
<div class="tr" style="left:717.74px;width:14px;top:130.4px;color:#16161c;font-size:6.7px;text-shadow:0 0 .3px rgba(10,10,20,.35)">10</div>
<div class="tr" style="left:729.0100000000001px;width:14px;top:130.4px;color:#16161c;font-size:6.7px;text-shadow:0 0 .3px rgba(10,10,20,.35)">11</div>
<div class="tr" style="left:740.2800000000001px;width:14px;top:130.4px;color:#16161c;font-size:6.7px;text-shadow:0 0 .3px rgba(10,10,20,.35)">12</div>
<div class="tr" style="left:751.5500000000001px;width:14px;top:130.4px;color:#cc3a3a;font-size:6.7px;text-shadow:0 0 .3px rgba(10,10,20,.35)">13</div>
<div class="tr" style="left:762.82px;width:14px;top:130.4px;color:#cc3a3a;font-size:6.7px;text-shadow:0 0 .3px rgba(10,10,20,.35)">14</div>
<div class="tr" style="left:695.2px;width:14px;top:138.20000000000002px;color:#16161c;font-size:6.7px;text-shadow:0 0 .3px rgba(10,10,20,.35)">15</div>
<div class="tr" style="left:706.47px;width:14px;top:138.20000000000002px;color:#16161c;font-size:6.7px;text-shadow:0 0 .3px rgba(10,10,20,.35)">16</div>
<div class="tr" style="left:717.74px;width:14px;top:138.20000000000002px;color:#16161c;font-size:6.7px;text-shadow:0 0 .3px rgba(10,10,20,.35)">17</div>
<div class="tr" style="left:729.0100000000001px;width:14px;top:138.20000000000002px;color:#16161c;font-size:6.7px;text-shadow:0 0 .3px rgba(10,10,20,.35)">18</div>
<div class="tr" style="left:740.2800000000001px;width:14px;top:138.20000000000002px;color:#16161c;font-size:6.7px;text-shadow:0 0 .3px rgba(10,10,20,.35)">19</div>
<div class="tr" style="left:751.5500000000001px;width:14px;top:138.20000000000002px;color:#cc3a3a;font-size:6.7px;text-shadow:0 0 .3px rgba(10,10,20,.35)">20</div>
<div class="tr" style="left:762.82px;width:14px;top:138.20000000000002px;color:#cc3a3a;font-size:6.7px;text-shadow:0 0 .3px rgba(10,10,20,.35)">21</div>
<div class="tr" style="left:695.2px;width:14px;top:146.0px;color:#16161c;font-size:6.7px;text-shadow:0 0 .3px rgba(10,10,20,.35)">22</div>
<div class="tr" style="left:706.47px;width:14px;top:146.0px;color:#16161c;font-size:6.7px;text-shadow:0 0 .3px rgba(10,10,20,.35)">23</div>
<div class="tr" style="left:717.74px;width:14px;top:146.0px;color:#16161c;font-size:6.7px;text-shadow:0 0 .3px rgba(10,10,20,.35)">24</div>
<div class="tr" style="left:729.0100000000001px;width:14px;top:146.0px;color:#16161c;font-size:6.7px;text-shadow:0 0 .3px rgba(10,10,20,.35)">25</div>
<div class="tr" style="left:740.2800000000001px;width:14px;top:146.0px;color:#16161c;font-size:6.7px;text-shadow:0 0 .3px rgba(10,10,20,.35)">26</div>
<div class="tr" style="left:751.5500000000001px;width:14px;top:146.0px;color:#cc3a3a;font-size:6.7px;text-shadow:0 0 .3px rgba(10,10,20,.35)">27</div>
<div class="tr" style="left:762.82px;width:14px;top:146.0px;color:#cc3a3a;font-size:6.7px;text-shadow:0 0 .3px rgba(10,10,20,.35)">28</div>
<div class="tr" style="left:695.2px;width:14px;top:153.8px;color:#e9e9ee;font-size:6.7px;text-shadow:none">1</div>
<div class="tr" style="left:706.47px;width:14px;top:153.8px;color:#e9e9ee;font-size:6.7px;text-shadow:none">2</div>
<div class="tr" style="left:717.74px;width:14px;top:153.8px;color:#e9e9ee;font-size:6.7px;text-shadow:none">3</div>
<div class="tr" style="left:729.0100000000001px;width:14px;top:153.8px;color:#e9e9ee;font-size:6.7px;text-shadow:none">4</div>
<div class="tr" style="left:740.2800000000001px;width:14px;top:153.8px;color:#e9e9ee;font-size:6.7px;text-shadow:none">5</div>
<div class="tr" style="left:751.5500000000001px;width:14px;top:153.8px;color:#e9e9ee;font-size:6.7px;text-shadow:none">6</div>
<div class="tr" style="left:762.82px;width:14px;top:153.8px;color:#e9e9ee;font-size:6.7px;text-shadow:none">7</div>
<div class="tc" style="left:783.3px;width:20px;top:104.8px;color:#1a1a24">Gen</div>
<div class="tc" style="left:798.8px;width:20px;top:104.8px;color:#1a1a24">Feb</div>
<div class="tc" style="left:813.7px;width:20px;top:104.8px;color:#1a1a24">Mar</div>
<div class="tc" style="left:783.3px;width:20px;top:116.6px;color:#1a1a24">Apr</div>
<div class="tc" style="left:798.8px;width:20px;top:116.6px;color:#1a1a24">Mag</div>
<div class="tc" style="left:813.7px;width:20px;top:116.6px;color:#1a1a24">Giu</div>
<div class="tc" style="left:783.3px;width:20px;top:128.4px;color:#1a1a24">Lug</div>
<div class="tc" style="left:798.8px;width:20px;top:128.4px;color:#1a1a24">Ago</div>
<div class="tc" style="left:813.7px;width:20px;top:128.4px;color:#1a1a24">Set</div>
<div class="tc" style="left:783.3px;width:20px;top:141.4px;color:#1a1a24">Ott</div>
<div class="tc" style="left:798.8px;width:20px;top:141.4px;color:#1a1a24">Nov</div>
<div class="tc" style="left:813.7px;width:20px;top:141.4px;color:#1a1a24">Dic</div>
<div class="a" style="left:801.6px;top:103px;width:1px;height:48px;background:#d8d8df"></div>
<div class="a" style="left:817px;top:103px;width:1px;height:48px;background:#d8d8df"></div>
<div class="a" style="left:786px;top:114.8px;width:46px;height:1px;background:#d8d8df"></div>
<div class="a" style="left:786px;top:126.6px;width:46px;height:1px;background:#d8d8df"></div>
<div class="a" style="left:786px;top:138.8px;width:46px;height:1px;background:#d8d8df"></div>
<svg style="left:792px;top:151.6px" width="6" height="10" viewBox="0 0 6 10"><path d="M5.4 0.6 L0.7 5 L5.4 9.4 Z" fill="#c6ecdc" stroke="#58aaa6" stroke-width="0.8" stroke-linejoin="round"/></svg>
<svg style="left:803.9px;top:152.1px" width="11" height="9" viewBox="0 0 11 9"><path d="M0.6 0.6 L4.4 4.5 L0.6 8.4 Z" fill="#f2ee70" stroke="#b0ac3c" stroke-width="0.7"/><path d="M10.4 0.6 L6.6 4.5 L10.4 8.4 Z" fill="#f2ee70" stroke="#b0ac3c" stroke-width="0.7"/><rect x="4.7" y="0.4" width="1.6" height="8.2" fill="#e6e25a" stroke="#a8a438" stroke-width="0.5"/></svg>
<svg style="left:822.2px;top:151.6px" width="6" height="10" viewBox="0 0 6 10"><path d="M0.6 0.6 L5.3 5 L0.6 9.4 Z" fill="#c6ecdc" stroke="#58aaa6" stroke-width="0.8" stroke-linejoin="round"/></svg>
<div class="a" style="left:6px;top:161.8px;width:828px;height:11.2px;background:#c5d2e9"></div>
<div class="a" style="left:6px;top:161.5px;width:828px;height:1px;background:#b0bcd6"></div>
<div class="tc" style="left:59.0px;width:60px;top:163.5px;color:#14182a">Lunedì</div>
<div class="tc" style="left:225.5px;width:60px;top:163.5px;color:#14182a">Martedì</div>
<div class="tc" style="left:391.5px;width:60px;top:163.5px;color:#14182a">Mercoledì</div>
<div class="tc" style="left:557.5px;width:60px;top:163.5px;color:#14182a">Giovedì</div>
<div class="tc" style="left:722.5px;width:60px;top:163.5px;color:#14182a">Venerdì</div>
<div class="cell" style="left:6px;top:173px;width:166px;height:52px;background:#eef1f8"><div class="a" style="left:0;top:0;width:172.91666666666669px;height:60px;transform:scaleX(0.96);transform-origin:0 0;color:#14141a"><div class="a" style="right:4.791666666666666px;top:-0.4px;white-space:nowrap;line-height:9px;color:#14141a">28 Dicembre 09</div></div></div>
<div class="cell" style="left:173px;top:173px;width:165px;height:52px;background:#eef1f8"><div class="a" style="left:0;top:0;width:171.875px;height:60px;transform:scaleX(0.96);transform-origin:0 0;color:#14141a"><div class="a" style="right:4.791666666666666px;top:-0.4px;white-space:nowrap;line-height:9px;color:#14141a">29 Dicembre 09</div></div></div>
<div class="cell" style="left:339px;top:173px;width:165px;height:52px;background:#eef1f8"><div class="a" style="left:0;top:0;width:171.875px;height:60px;transform:scaleX(0.96);transform-origin:0 0;color:#14141a"><div class="a" style="right:4.791666666666666px;top:-0.4px;white-space:nowrap;line-height:9px;color:#14141a">30 Dicembre 09</div></div></div>
<div class="cell" style="left:505px;top:173px;width:165px;height:52px;background:#eef1f8"><div class="a" style="left:0;top:0;width:171.875px;height:60px;transform:scaleX(0.96);transform-origin:0 0;color:#14141a"><div class="a" style="right:4.791666666666666px;top:-0.4px;white-space:nowrap;line-height:9px;color:#14141a">31 Dicembre 09</div></div></div>
<div class="cell" style="left:671px;top:173px;width:163px;height:52px;background:#fff"><div class="a" style="left:0;top:0;width:169.79166666666669px;height:60px;transform:scaleX(0.96);transform-origin:0 0;color:#14141a"><div class="a" style="right:3.0208333333333335px;top:-0.4px;white-space:nowrap;line-height:9px;color:#8c1c20">Capodanno &nbsp;1</div></div></div>
<div class="cell" style="left:6px;top:226px;width:166px;height:53px;background:#fff"><div class="a" style="left:0;top:0;width:172.91666666666669px;height:60px;transform:scaleX(0.96);transform-origin:0 0;color:#14141a"><div class="a" style="right:4.791666666666666px;top:0.5px;white-space:nowrap;line-height:9px;color:#14141a">4</div><div class="a" style="left:1.1458333333333335px;top:8.3px;white-space:nowrap;line-height:9px"><span style="letter-spacing:-0.8px">SEGRE</span> - Contabilità</div></div></div>
<div class="cell" style="left:173px;top:226px;width:165px;height:53px;background:#fff"><div class="a" style="left:0;top:0;width:171.875px;height:60px;transform:scaleX(0.96);transform-origin:0 0;color:#14141a"><div class="a" style="right:4.791666666666666px;top:0.5px;white-space:nowrap;line-height:9px;color:#14141a">5</div><div class="a" style="left:1.1458333333333335px;top:8.3px;white-space:nowrap;line-height:9px"><span style="letter-spacing:-0.8px">SEGRE</span> - Redazione dichiarazioni conformità</div></div></div>
<div class="cell" style="left:339px;top:226px;width:165px;height:53px;background:#fff"><div class="a" style="left:0;top:0;width:171.875px;height:60px;transform:scaleX(0.96);transform-origin:0 0;color:#14141a"><div class="a" style="right:4.791666666666666px;top:0.5px;white-space:nowrap;line-height:9px;color:#8c1c20">Epifania &nbsp;6</div><div class="a" style="left:1.1458333333333335px;top:8.3px;white-space:nowrap;line-height:9px"><span style="letter-spacing:-0.8px">SEGRE</span> - Compilazione moduli</div></div></div>
<div class="cell" style="left:505px;top:226px;width:165px;height:53px;background:#fff"><div class="a" style="left:0;top:0;width:171.875px;height:60px;transform:scaleX(0.96);transform-origin:0 0;color:#14141a"><div class="a" style="right:4.791666666666666px;top:0.5px;white-space:nowrap;line-height:9px;color:#14141a">7</div><div class="a" style="left:1.1458333333333335px;top:8.3px;white-space:nowrap;line-height:9px"><span style="letter-spacing:-0.8px">SEGRE</span> - Consegna modulistica in comune</div><div class="a" style="left:1.1458333333333335px;top:17.35px;white-space:nowrap;line-height:9px"><span style="letter-spacing:-0.8px">SEGRE</span> - Banca</div></div></div>
<div class="cell" style="left:671px;top:226px;width:163px;height:53px;background:#fff"><div class="a" style="left:0;top:0;width:169.79166666666669px;height:60px;transform:scaleX(0.96);transform-origin:0 0;color:#14141a"><div class="a" style="right:3.0208333333333335px;top:0.5px;white-space:nowrap;line-height:9px;color:#14141a">8</div><div class="a" style="left:1.1458333333333335px;top:8.3px;white-space:nowrap;line-height:9px"><span style="letter-spacing:-0.8px">SEGRE</span> - Posta</div></div></div>
<div class="cell" style="left:6px;top:280px;width:166px;height:52.5px;background:#fff"><div class="a" style="left:0;top:0;width:172.91666666666669px;height:60px;transform:scaleX(0.96);transform-origin:0 0;color:#14141a"><div class="a" style="right:4.791666666666666px;top:0.5px;white-space:nowrap;line-height:9px;color:#14141a">11</div><div class="a" style="left:1.1458333333333335px;top:8.3px;white-space:nowrap;line-height:9px"><span style="letter-spacing:-0.8px">SEGRE</span> - Ordine materiale ufficio</div><div class="a" style="left:1.1458333333333335px;top:17.35px;white-space:nowrap;line-height:9px"><span style="letter-spacing:-0.8px">SEGRE</span> - Compilazione modulistica pratiche</div></div></div>
<div class="cell" style="left:173px;top:280px;width:165px;height:52.5px;background:#fff"><div class="a" style="left:0;top:0;width:171.875px;height:60px;transform:scaleX(0.96);transform-origin:0 0;color:#14141a"><div class="a" style="right:4.791666666666666px;top:0.5px;white-space:nowrap;line-height:9px;color:#14141a">12</div></div></div>
<div class="cell" style="left:339px;top:280px;width:165px;height:52.5px;background:#fff"><div class="a" style="left:0;top:0;width:171.875px;height:60px;transform:scaleX(0.96);transform-origin:0 0;color:#14141a"><div class="a" style="right:4.791666666666666px;top:0.5px;white-space:nowrap;line-height:9px;color:#14141a">13</div></div></div>
<div class="cell" style="left:505px;top:280px;width:165px;height:52.5px;background:#fff"><div class="a" style="left:0;top:0;width:171.875px;height:60px;transform:scaleX(0.96);transform-origin:0 0;color:#14141a"><div class="a" style="right:4.791666666666666px;top:0.5px;white-space:nowrap;line-height:9px;color:#14141a">14</div><div class="a" style="left:1.1458333333333335px;top:8.3px;white-space:nowrap;line-height:9px"><span style="letter-spacing:-0.47px">AMM</span> - Rilievo edifiucio esistente</div><div class="a" style="left:1.1458333333333335px;top:17.35px;white-space:nowrap;line-height:9px"><span style="letter-spacing:-0.47px">AMM</span> - Progettazione</div></div></div>
<div class="cell" style="left:671px;top:280px;width:163px;height:52.5px;background:#fff"><div class="a" style="left:0;top:0;width:169.79166666666669px;height:60px;transform:scaleX(0.96);transform-origin:0 0;color:#14141a"><div class="a" style="right:3.0208333333333335px;top:0.5px;white-space:nowrap;line-height:9px;color:#14141a">15</div><div class="a" style="left:1.1458333333333335px;top:8.3px;white-space:nowrap;line-height:9px"><span style="letter-spacing:-0.8px">SEGRE</span> - Compilazione moduli</div></div></div>
<div class="cell" style="left:6px;top:333.5px;width:166px;height:52.60000000000002px;background:#fff"><div class="a" style="left:0;top:0;width:172.91666666666669px;height:60px;transform:scaleX(0.96);transform-origin:0 0;color:#14141a"><div class="a" style="right:4.791666666666666px;top:0.5px;white-space:nowrap;line-height:9px;color:#14141a">18</div><div class="a" style="left:1.1458333333333335px;top:8.3px;white-space:nowrap;line-height:9px"><span style="letter-spacing:-0.47px">AMM</span> - Progetto preliminare</div></div></div>
<div class="cell" style="left:173px;top:333.5px;width:165px;height:52.60000000000002px;background:#fff"><div class="a" style="left:0;top:0;width:171.875px;height:60px;transform:scaleX(0.96);transform-origin:0 0;color:#14141a"><div class="a" style="right:4.791666666666666px;top:0.5px;white-space:nowrap;line-height:9px;color:#14141a">19</div><div class="a" style="left:1.1458333333333335px;top:8.3px;white-space:nowrap;line-height:9px"><span style="letter-spacing:-0.47px">AMM</span> - Redazione disegni</div></div></div>
<div class="cell" style="left:339px;top:333.5px;width:165px;height:52.60000000000002px;background:#fff"><div class="a" style="left:0;top:0;width:171.875px;height:60px;transform:scaleX(0.96);transform-origin:0 0;color:#14141a"><div class="a" style="right:4.791666666666666px;top:0.5px;white-space:nowrap;line-height:9px;color:#14141a">20</div><div class="a" style="left:1.1458333333333335px;top:8.3px;white-space:nowrap;line-height:9px"><span style="letter-spacing:-0.17px">ING</span> - Pre-progetto e Layuot di massima</div><div class="a" style="left:1.1458333333333335px;top:17.35px;white-space:nowrap;line-height:9px"><span style="letter-spacing:-0.64px">GEOM</span> - Redazione computo metrico-estimativo di massima</div><div class="a" style="left:1.1458333333333335px;top:26.400000000000002px;white-space:nowrap;line-height:9px"><span style="letter-spacing:-0.56px">COLL</span> - Relazione fotografica</div></div></div>
<div class="cell" style="left:505px;top:333.5px;width:165px;height:52.60000000000002px;background:#fff"><div class="a" style="left:0;top:0;width:171.875px;height:60px;transform:scaleX(0.96);transform-origin:0 0;color:#14141a"><div class="a" style="right:4.791666666666666px;top:0.5px;white-space:nowrap;line-height:9px;color:#14141a">21</div></div></div>
<div class="cell" style="left:671px;top:333.5px;width:163px;height:52.60000000000002px;background:#fff"><div class="a" style="left:0;top:0;width:169.79166666666669px;height:60px;transform:scaleX(0.96);transform-origin:0 0;color:#14141a"><div class="a" style="right:3.0208333333333335px;top:0.5px;white-space:nowrap;line-height:9px;color:#14141a">22</div><div class="a" style="left:1.1458333333333335px;top:8.3px;white-space:nowrap;line-height:9px"><span style="letter-spacing:-0.8px">SEGRE</span> - Reperimento Relazione geologica</div><div class="a" style="left:1.1458333333333335px;top:17.35px;white-space:nowrap;line-height:9px"><span style="letter-spacing:-0.47px">AMM</span> - Riunione con committenti</div><div class="a" style="left:1.1458333333333335px;top:26.400000000000002px;white-space:nowrap;line-height:9px"><span style="letter-spacing:-0.8px">SEGRE</span> - Redazione contratto</div><div class="a" style="left:1.1458333333333335px;top:35.45px;white-space:nowrap;line-height:9px"><span style="letter-spacing:-0.64px">GEOM</span> - Elaborati grafici</div><div class="a" style="left:1.1458333333333335px;top:44.5px;white-space:nowrap;line-height:9px"><span style="letter-spacing:-0.8px">SEGRE</span> - Redazione contratto</div></div></div>
<div class="cell" style="left:6px;top:387.1px;width:166px;height:52.89999999999998px;background:#fff"><div class="a" style="left:0;top:0;width:172.91666666666669px;height:60px;transform:scaleX(0.96);transform-origin:0 0;color:#14141a"><div class="a" style="right:4.791666666666666px;top:0.5px;white-space:nowrap;line-height:9px;color:#14141a">25</div><div class="a" style="left:1.1458333333333335px;top:8.3px;white-space:nowrap;line-height:9px"><span style="letter-spacing:-0.64px">GEOM</span> - Relazione tecnica</div><div class="a" style="left:1.1458333333333335px;top:17.35px;white-space:nowrap;line-height:9px"><span style="letter-spacing:-0.56px">COLL</span> - Elaborati grafici progetto definitivo</div><div class="a" style="left:1.1458333333333335px;top:26.400000000000002px;white-space:nowrap;line-height:9px"><span style="letter-spacing:-0.56px">COLL</span> - Documento previsionale impatto acustico</div></div></div>
<div class="cell" style="left:173px;top:387.1px;width:165px;height:52.89999999999998px;background:#fff"><div class="a" style="left:0;top:0;width:171.875px;height:60px;transform:scaleX(0.96);transform-origin:0 0;color:#14141a"><div class="a" style="right:4.791666666666666px;top:0.5px;white-space:nowrap;line-height:9px;color:#14141a">26</div></div></div>
<div class="cell" style="left:339px;top:387.1px;width:165px;height:52.89999999999998px;background:#fff"><div class="a" style="left:0;top:0;width:171.875px;height:60px;transform:scaleX(0.96);transform-origin:0 0;color:#14141a"><div class="a" style="right:4.791666666666666px;top:0.5px;white-space:nowrap;line-height:9px;color:#14141a">27</div></div></div>
<div class="cell" style="left:505px;top:387.1px;width:165px;height:52.89999999999998px;background:#fff"><div class="a" style="left:0;top:0;width:171.875px;height:60px;transform:scaleX(0.96);transform-origin:0 0;color:#14141a"><div class="a" style="right:4.791666666666666px;top:0.5px;white-space:nowrap;line-height:9px;color:#14141a">28</div></div></div>
<div class="cell" style="left:671px;top:387.1px;width:163px;height:52.89999999999998px;background:#e8f0de"><div class="a" style="left:0;top:0;width:169.79166666666669px;height:60px;transform:scaleX(0.96);transform-origin:0 0;color:#14141a"><div class="a" style="right:3.0208333333333335px;top:0.5px;white-space:nowrap;line-height:9px;color:#14141a">29</div><div class="a" style="left:1.1458333333333335px;top:8.3px;white-space:nowrap;line-height:9px"><span style="letter-spacing:-0.8px">SEGRE</span> - Pagamento Fattura n° 1/2010 del 08.01.2010</div><div class="a" style="left:1.1458333333333335px;top:17.35px;white-space:nowrap;line-height:9px"><span style="letter-spacing:-0.47px">AMM</span> - Progetto preliminare</div><div class="a" style="left:1.1458333333333335px;top:26.400000000000002px;white-space:nowrap;line-height:9px"><span style="letter-spacing:-0.8px">SEGRE</span> - Consegna pratica in comune pertinenza</div></div></div>
<div class="cell" style="left:6px;top:441px;width:166px;height:52.80000000000001px;background:#ebeef6"><div class="a" style="left:0;top:0;width:172.91666666666669px;height:60px;transform:scaleX(0.96);transform-origin:0 0;color:#14141a"><div class="a" style="right:4.791666666666666px;top:0.5px;white-space:nowrap;line-height:9px;color:#14141a">1 Febbraio</div><div class="a" style="left:1.1458333333333335px;top:8.3px;white-space:nowrap;line-height:9px"><span style="letter-spacing:-0.47px">AMM</span> - Progetto preliminare</div><div class="a" style="left:1.1458333333333335px;top:17.35px;white-space:nowrap;line-height:9px"><span style="letter-spacing:-0.17px">ING</span> - Pre-progetto e Layuot di massima</div><div class="a" style="left:1.1458333333333335px;top:26.400000000000002px;white-space:nowrap;line-height:9px"><span style="letter-spacing:-0.17px">ING</span> - Certificato energetico</div></div></div>
<div class="cell" style="left:173px;top:441px;width:165px;height:52.80000000000001px;background:#ebeef6"><div class="a" style="left:0;top:0;width:171.875px;height:60px;transform:scaleX(0.96);transform-origin:0 0;color:#14141a"><div class="a" style="right:4.791666666666666px;top:0.5px;white-space:nowrap;line-height:9px;color:#14141a">2 Febbraio</div><div class="a" style="left:1.1458333333333335px;top:8.3px;white-space:nowrap;line-height:9px"><span style="letter-spacing:-0.47px">AMM</span> - Progetto preliminare</div><div class="a" style="left:1.1458333333333335px;top:17.35px;white-space:nowrap;line-height:9px"><span style="letter-spacing:-0.64px">GEOM</span> - Redazione computo metrico-estimativo di massima</div></div></div>
<div class="cell" style="left:339px;top:441px;width:165px;height:52.80000000000001px;background:#ebeef6"><div class="a" style="left:0;top:0;width:171.875px;height:60px;transform:scaleX(0.96);transform-origin:0 0;color:#14141a"><div class="a" style="right:4.791666666666666px;top:0.5px;white-space:nowrap;line-height:9px;color:#14141a">3 Febbraio</div><div class="a" style="left:1.1458333333333335px;top:8.3px;white-space:nowrap;line-height:9px"><span style="letter-spacing:-0.47px">AMM</span> - Progetto preliminare</div><div class="a" style="left:1.1458333333333335px;top:17.35px;white-space:nowrap;line-height:9px"><span style="letter-spacing:-0.64px">GEOM</span> - Relazione fotografica</div></div></div>
<div class="cell" style="left:505px;top:441px;width:165px;height:52.80000000000001px;background:#ebeef6"><div class="a" style="left:0;top:0;width:171.875px;height:60px;transform:scaleX(0.96);transform-origin:0 0;color:#14141a"><div class="a" style="right:4.791666666666666px;top:0.5px;white-space:nowrap;line-height:9px;color:#14141a">4 Febbraio</div><div class="a" style="left:1.1458333333333335px;top:8.3px;white-space:nowrap;line-height:9px"><span style="letter-spacing:-0.47px">AMM</span> - Progetto preliminare</div></div></div>
<div class="cell" style="left:671px;top:441px;width:163px;height:52.80000000000001px;background:#ebeef6"><div class="a" style="left:0;top:0;width:169.79166666666669px;height:60px;transform:scaleX(0.96);transform-origin:0 0;color:#14141a"><div class="a" style="right:3.0208333333333335px;top:0.5px;white-space:nowrap;line-height:9px;color:#14141a">5 Febbraio</div><div class="a" style="left:1.1458333333333335px;top:8.3px;white-space:nowrap;line-height:9px"><span style="letter-spacing:-0.47px">AMM</span> - Progetto preliminare</div><div class="a" style="left:1.1458333333333335px;top:17.35px;white-space:nowrap;line-height:9px"><span style="letter-spacing:-0.64px">GEOM</span> - Relazione descrittiva progetto definitivo</div></div></div>
<div class="a" style="left:6px;top:225px;width:828px;height:1px;background:#a0a2b9"></div>
<div class="a" style="left:6px;top:279px;width:828px;height:1px;background:#a0a2b9"></div>
<div class="a" style="left:6px;top:332.5px;width:828px;height:1px;background:#a0a2b9"></div>
<div class="a" style="left:6px;top:386.1px;width:828px;height:1px;background:#a0a2b9"></div>
<div class="a" style="left:6px;top:440px;width:828px;height:1px;background:#a0a2b9"></div>
<div class="a" style="left:6px;top:493.8px;width:828px;height:1px;background:#a0a2b9"></div>
<div class="a" style="left:172px;top:161.8px;width:1px;height:331.9px;background:#a0a2b9"></div>
<div class="a" style="left:338px;top:161.8px;width:1px;height:331.9px;background:#a0a2b9"></div>
<div class="a" style="left:504px;top:161.8px;width:1px;height:331.9px;background:#a0a2b9"></div>
<div class="a" style="left:670px;top:161.8px;width:1px;height:331.9px;background:#a0a2b9"></div>
<div class="a" style="left:6px;top:494.5px;width:828px;height:3px;background:#e4e4ec"></div>
<svg style="left:356.5px;top:160.5px" width="9" height="15" viewBox="0 0 9 15"><path d="M0.6 0.6 V11.4 L3.2 9 L5.2 13.6 L6.8 12.9 L4.8 8.4 H8.2 Z" fill="#fff" stroke="#000" stroke-width="0.9" stroke-linejoin="round"/></svg>
</div>
</body>
</html>
